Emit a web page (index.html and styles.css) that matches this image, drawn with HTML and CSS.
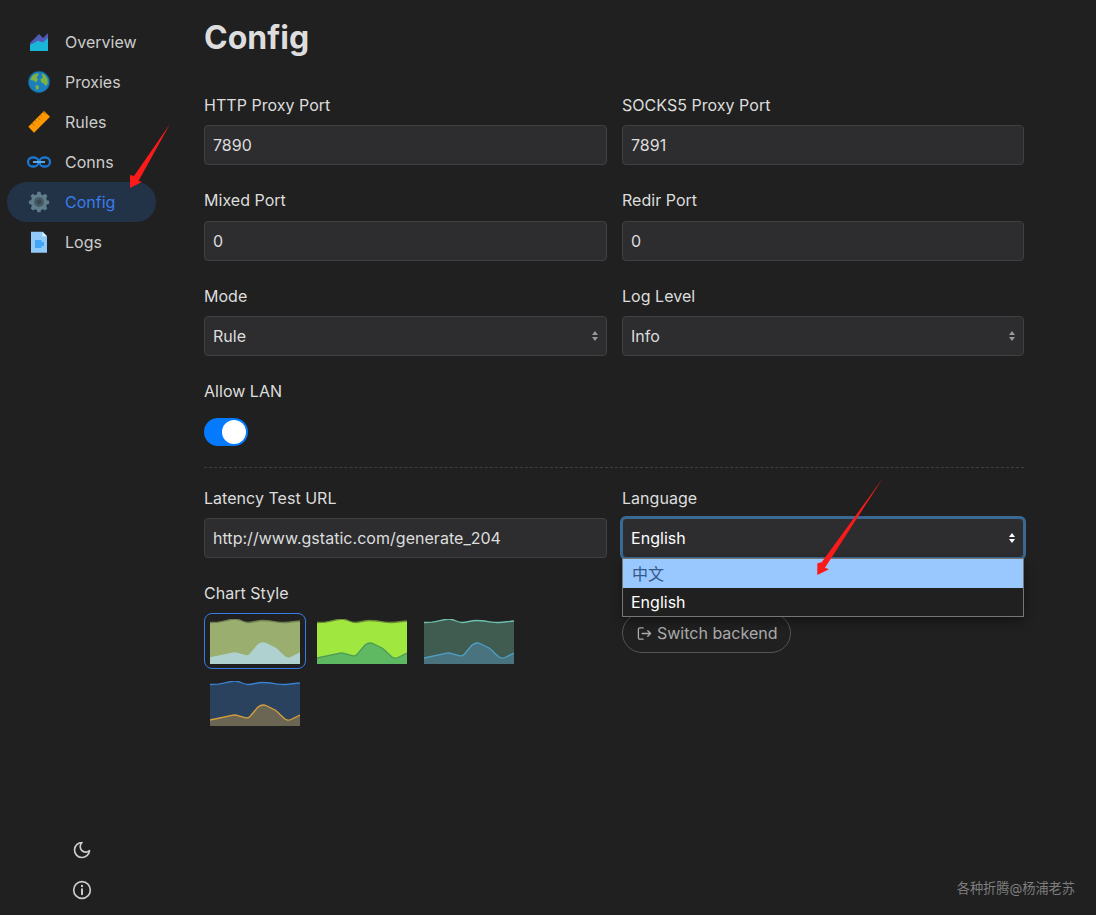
FILE: index.html
```html
<!DOCTYPE html>
<html lang="en">

<head>
    <meta charset="UTF-8">
    <meta name="viewport" content="width=device-width, initial-scale=1.0">
    <title>Config</title>
    <link rel="stylesheet" href="styles.css">
</head>

<body>

    <div class="app">
        <aside class="sidebar">
            <nav class="nav">
                <a class="nav-item">
                    <svg class="nav-icon" viewBox="0 0 28 28">
                        <path fill="#4f5bb5" d="M5 15 14 6 18 10 23 5V17H5Z" />
                        <path fill="#1ab6d8" d="M5 17 13 12.800 18 14.500 23 10V23H5Z" />
                    </svg>
                    <span>Overview</span>
                </a>
                <a class="nav-item">
                    <svg class="nav-icon" viewBox="0 0 28 28">
                        <circle cx="14" cy="14" r="10.700" fill="#1b7fbd" stroke="#12517c" stroke-width="0.600" />
                        <path fill="#7cb342" d="M9 6.500 13 5 13.500 7.500 11.500 9 13 11.500 11 14.500 8.500 12.500 5.500 12C5.800 9.800 7.200 7.800 9 6.500Z" />
                        <path fill="#7cb342" d="M17 5.500 20 7 22.500 11 22.800 15 21 18 18.500 15.500 16 14 15.500 11 18 9.500 17 7.500Z" />
                        <path fill="#7cb342" d="M11 17 14 18 13.500 21 11.500 22 10.500 19.500Z" />
                    </svg>
                    <span>Proxies</span>
                </a>
                <a class="nav-item">
                    <svg class="nav-icon" viewBox="0 0 28 28">
                        <path fill="#ff9800" d="M3.300 18.700 19 3 25 8.700 9 24.700Z" />
                        <path stroke="#b06a00" stroke-width="1" d="M7 15 9.500 17.500M9.800 12.200 11.300 13.700M12.600 9.400 15.100 11.900M15.400 6.600 16.900 8.100M18.200 3.800 20.700 6.300" />
                    </svg>
                    <span>Rules</span>
                </a>
                <a class="nav-item">
                    <svg class="nav-icon" viewBox="0 0 28 28">
                        <g fill="none" stroke="#1976d2" stroke-width="2.300">
                            <rect x="3" y="9.500" width="10.500" height="9" rx="4.500" />
                            <rect x="14.500" y="9.500" width="10.500" height="9" rx="4.500" />
                        </g>
                        <path stroke="#64b5f6" stroke-width="1.800" d="M8 14H20" />
                    </svg>
                    <span>Conns</span>
                </a>
                <a class="nav-item active">
                    <svg class="nav-icon" viewBox="0 0 28 28">
                        <g transform="translate(2.960 2.700) scale(0.920)">
                            <path fill="#607d8b" d="M10.300 1.200H13.700L14.300 4 16.300 4.900 18.800 3.400 21.200 5.800 19.800 8.300 20.600 10.300 23 11V14.200L20.500 15 19.700 16.900 21.100 19.200 18.700 21.600 16.300 20.100 14.300 20.900 13.700 23.500H10.300L9.700 20.900 7.700 20.100 5.300 21.600 2.900 19.200 4.300 16.900 3.500 15 1 14.200V11L3.400 10.300 4.200 8.300 2.800 5.800 5.200 3.400 7.700 4.900 9.700 4Z" />
                            <circle cx="12" cy="12.300" r="5.400" fill="#455a64" />
                            <circle cx="12" cy="12.300" r="2.600" fill="#37474f" />
                        </g>
                    </svg>
                    <span>Config</span>
                </a>
                <a class="nav-item">
                    <svg class="nav-icon" viewBox="0 0 28 28">
                        <path fill="#90caf9" d="M6 3.700H17.500L22 8.200V24.700H6Z" />
                        <path fill="#e1f5fe" d="M17.500 3.700 22 8.200H17.500Z" />
                        <path fill="#42a5f5" d="M10 12H16.500V14H19V18H16.500V20H10Z" />
                    </svg>
                    <span>Logs</span>
                </a>
            </nav>
            <div class="side-tools">
                <button class="tool-btn">
                    <svg viewBox="0 0 24 24" class="tool-icon">
                        <path d="M12 3C11.900 3 12 3 12 3A6.500 6.500 0 0 0 21 12.800 9 9 0 1 1 12 3Z" />
                    </svg>
                </button>
                <button class="tool-btn">
                    <svg viewBox="0 0 24 24" class="tool-icon">
                        <circle cx="12" cy="12" r="10" />
                        <path d="M12 11V17" stroke-width="2.400" />
                        <path d="M12 7V7.500" stroke-width="2.600" />
                    </svg>
                </button>
            </div>
        </aside>

        <main class="content">
            <h1 class="page-title">Config</h1>

            <div class="form-grid">
                <div class="field">
                    <label class="field-label">HTTP Proxy Port</label>
                    <input class="input" value="7890">
                </div>
                <div class="field">
                    <label class="field-label">SOCKS5 Proxy Port</label>
                    <input class="input" value="7891">
                </div>
                <div class="field">
                    <label class="field-label">Mixed Port</label>
                    <input class="input" value="0">
                </div>
                <div class="field">
                    <label class="field-label">Redir Port</label>
                    <input class="input" value="0">
                </div>
                <div class="field">
                    <label class="field-label">Mode</label>
                    <div class="select-wrap">
                        <select class="input select">
                            <option>Rule</option>
                        </select>
                    </div>
                </div>
                <div class="field">
                    <label class="field-label">Log Level</label>
                    <div class="select-wrap">
                        <select class="input select">
                            <option>Info</option>
                        </select>
                    </div>
                </div>
            </div>

            <div class="lan-field">
                <label class="field-label lan-label">Allow LAN</label>
                <div class="toggle"><span class="knob"></span></div>
            </div>

            <hr class="divider">

            <div class="form-grid lower-grid">
                <div class="field">
                    <label class="field-label">Latency Test URL</label>
                    <input class="input" value="http://www.gstatic.com/generate_204">
                </div>
                <div class="field language-field">
                    <label class="field-label">Language</label>
                    <div class="select-wrap open">
                        <select class="input select focused">
                            <option>English</option>
                        </select>
                        <div class="dropdown">
                            <div class="dropdown-item highlighted">中文</div>
                            <div class="dropdown-item">English</div>
                        </div>
                    </div>
                </div>
                <div class="field">
                    <label class="field-label">Chart Style</label>
                    <div class="chart-list">
                        <div class="chart-option selected">
                            <svg class="chart chart-a" viewBox="0 0 90 45">
                                <defs>
                                    <path id="top-line" d="M0 3.500 8 3.200C14 2.800 19 0 25 0 30 0 33 3.500 38 3.500 43 3.500 47 1.500 52 1.500 60 1.500 68 3.500 75 3.500 80 3.500 85 2 90 2" />
                                    <path id="top-area" d="M0 3.500 8 3.200C14 2.800 19 0 25 0 30 0 33 3.500 38 3.500 43 3.500 47 1.500 52 1.500 60 1.500 68 3.500 75 3.500 80 3.500 85 2 90 2V45H0Z" />
                                    <path id="bottom-line" d="M0 39 23 34.200Q25 33.800 27 34.300L36 36.800Q38 37.300 40 35.500L48 26Q52 23 56 24.500L65 29Q68 31 70 33.500L75 38Q78 40 81 38.500L90 34" />
                                    <path id="bottom-area" d="M0 39 23 34.200Q25 33.800 27 34.300L36 36.800Q38 37.300 40 35.500L48 26Q52 23 56 24.500L65 29Q68 31 70 33.500L75 38Q78 40 81 38.500L90 34V45H0Z" />
                                </defs>
                                <use class="top-fill" href="#top-area" />
                                <use class="top-stroke" href="#top-line" />
                                <use class="bottom-fill" href="#bottom-area" />
                                <use class="bottom-stroke" href="#bottom-line" />
                            </svg>
                        </div>
                        <div class="chart-option">
                            <svg class="chart chart-b" viewBox="0 0 90 45">
                                <use class="top-fill" href="#top-area" />
                                <use class="top-stroke" href="#top-line" />
                                <use class="bottom-fill" href="#bottom-area" />
                                <use class="bottom-stroke" href="#bottom-line" />
                            </svg>
                        </div>
                        <div class="chart-option">
                            <svg class="chart chart-c" viewBox="0 0 90 45">
                                <use class="top-fill" href="#top-area" />
                                <use class="top-stroke" href="#top-line" />
                                <use class="bottom-fill" href="#bottom-area" />
                                <use class="bottom-stroke" href="#bottom-line" />
                            </svg>
                        </div>
                        <div class="chart-option">
                            <svg class="chart chart-d" viewBox="0 0 90 45">
                                <use class="top-fill" href="#top-area" />
                                <use class="top-stroke" href="#top-line" />
                                <use class="bottom-fill" href="#bottom-area" />
                                <use class="bottom-stroke" href="#bottom-line" />
                            </svg>
                        </div>
                    </div>
                </div>
                <div class="field backend-field">
                    <button class="backend-btn">
                        <svg class="backend-icon" viewBox="0 0 16 16">
                            <path d="M6.500 2H3A1.500 1.500 0 0 0 1.500 3.500V12.500A1.500 1.500 0 0 0 3 14H6.500" />
                            <path d="M5.500 8H14.500M11.500 5 14.500 8 11.500 11" />
                        </svg>
                        <span>Switch backend</span>
                    </button>
                </div>
            </div>
        </main>
    </div>

    <!-- red arrows drawn on top of the screenshot -->
    <svg class="annotations" viewBox="0 0 1096 915">
        <path d="M170 124 138.500 181 142.300 181.700 130 188 130 175 134 176Z" />
        <path d="M883 478 825 567.700 829 569.300 817.300 575 817.300 563.300 821.700 562.300Z" />
    </svg>

    <div class="watermark">各种折腾@杨浦老苏</div>

</body>

</html>
```

FILE: styles.css
```css
* {
    box-sizing: border-box;
}

body {
    background-color: #202020;
    color: #ddd;
    font-family: Inter, "Noto Sans CJK SC", sans-serif;
    font-size: 16px;
    margin: 0;
    height: 915px;
    overflow: hidden;
    position: relative;
}

.app {
    display: flex;
    height: 100%;
}

/* sidebar */
.sidebar {
    width: 204px;
    flex-shrink: 0;
    display: flex;
    flex-direction: column;
    justify-content: space-between;
    padding: 22px 0 5px 7px;
}

.nav-item {
    display: flex;
    align-items: center;
    width: 149px;
    height: 40px;
    padding-left: 18px;
    border-radius: 20px;
    color: #ccc;
}

.nav-item.active {
    background-color: #233347;
    color: #387cec;
}

.nav-icon {
    width: 28px;
    height: 28px;
    margin-right: 12px;
    flex-shrink: 0;
}

.side-tools {
    display: flex;
    flex-direction: column;
    align-items: flex-start;
    padding-left: 55px;
}

.tool-btn {
    width: 40px;
    height: 40px;
    padding: 0;
    border: 0;
    background: none;
    display: flex;
    align-items: center;
    justify-content: center;
}

.tool-icon {
    width: 20px;
    height: 20px;
    fill: none;
    stroke: #ccc;
    stroke-width: 2;
    stroke-linecap: round;
    stroke-linejoin: round;
}

/* main form */
.content {
    width: 820px;
}

.page-title {
    font-size: 32px;
    font-weight: 700;
    line-height: 40px;
    color: #ddd;
    margin: 18px 0 36.75px;
}

.form-grid {
    display: grid;
    grid-template-columns: 403px 402px;
    column-gap: 15px;
    row-gap: 25.25px;
}

.lower-grid {
    row-gap: 25px;
}

.field-label {
    display: block;
    line-height: 20px;
    margin-bottom: 10.25px;
    color: #ddd;
    letter-spacing: 0.03px;
}

.input {
    display: block;
    width: 100%;
    height: 40px;
    padding: 0 8px;
    background-color: #2d2d30;
    border: 1px solid #404043;
    border-radius: 4px;
    color: #ddd;
    font-family: inherit;
    font-size: 16px;
    letter-spacing: 0.03px;
    outline: none;
}

.select {
    appearance: none;
    padding-right: 24px;
}

.select.focused {
    color: #fff;
    border-color: #3a6a94;
    box-shadow: 0 0 0 2px #3a6a94;
}

.select-wrap {
    position: relative;
}

/* up and down carets of the select */
.select-wrap::before,
.select-wrap::after {
    content: "";
    position: absolute;
    right: 9.500px;
    border-left: 3.500px solid transparent;
    border-right: 3.500px solid transparent;
    pointer-events: none;
}

.select-wrap::before {
    top: 15px;
    border-bottom: 4.500px solid #999;
}

.select-wrap::after {
    top: 20.500px;
    border-top: 4.500px solid #999;
}

.select-wrap.open::before {
    border-bottom-color: #fff;
}

.select-wrap.open::after {
    border-top-color: #fff;
}

.dropdown {
    position: absolute;
    top: 40px;
    left: 0;
    right: 0;
    z-index: 5;
    background-color: #202020;
    border: 1px solid #767676;
    box-shadow: 0 4px 10px rgba(0, 0, 0, 0.4);
}

.dropdown-item {
    height: 28.5px;
    line-height: 28.5px;
    padding-left: 8px;
    color: #fff;
}

.dropdown-item.highlighted {
    background-color: #99c8ff;
    color: #35578a;
    padding: 1px 0 0 9px;
}

.lan-field {
    margin-top: 25px;
}

.lan-label {
    margin-bottom: 17px;
}

.toggle {
    width: 44px;
    height: 28px;
    border-radius: 14px;
    background-color: #047aff;
    padding: 2px;
    display: flex;
    justify-content: flex-end;
}

.knob {
    width: 24px;
    height: 24px;
    border-radius: 50%;
    background-color: #fff;
}

.divider {
    border: 0;
    border-top: 1px dashed #3f3f3f;
    margin: 21px 0 19.75px;
}

/* chart style picker */
.chart-list {
    display: flex;
    flex-wrap: wrap;
    gap: 6px 5px;
}

.chart-option {
    width: 102px;
    height: 56px;
    padding: 5px;
    border: 1px solid transparent;
    border-radius: 8px;
}

.chart-option.selected {
    border-color: #387cec;
}

.chart {
    display: block;
    width: 90px;
    height: 45px;
}

.top-stroke,
.bottom-stroke {
    fill: none;
    stroke-width: 1.3;
}

.chart-a .top-fill {
    fill: #9aae70;
}

.chart-a .top-stroke {
    stroke: #6f7f4f;
}

.chart-a .bottom-fill {
    fill: #afd2d0;
}

.chart-a .bottom-stroke {
    stroke: #afd2d0;
}

.chart-b .top-fill {
    fill: #a0e840;
}

.chart-b .top-stroke {
    stroke: #6b8a35;
}

.chart-b .bottom-fill {
    fill: #5fb963;
}

.chart-b .bottom-stroke {
    stroke: #4e9a55;
}

.chart-c .top-fill {
    fill: #405c50;
}

.chart-c .top-stroke {
    stroke: #6fbfae;
}

.chart-c .bottom-fill {
    fill: #4a7380;
}

.chart-c .bottom-stroke {
    stroke: #4f9fc6;
}

.chart-d .top-fill {
    fill: #2a425e;
}

.chart-d .top-stroke {
    stroke: #3a7fd0;
}

.chart-d .bottom-fill {
    fill: #6b6553;
}

.chart-d .bottom-stroke {
    stroke: #d9a13c;
}

.backend-field {
    padding-top: 30.25px;
}

.backend-btn {
    display: flex;
    align-items: center;
    gap: 5px;
    width: 169px;
    height: 40px;
    padding: 0 0 0 14px;
    background: none;
    border: 1px solid #555;
    border-radius: 20px;
    color: #aaa;
    font-family: inherit;
    font-size: 16px;
}

.backend-icon {
    width: 15px;
    height: 15px;
    fill: none;
    stroke: #aaa;
    stroke-width: 1.400;
    stroke-linecap: round;
    stroke-linejoin: round;
}

/* overlays */
.annotations {
    position: absolute;
    top: 0;
    left: 0;
    width: 1096px;
    height: 915px;
    z-index: 10;
    fill: #fb1a1a;
    pointer-events: none;
}

.watermark {
    position: absolute;
    right: 21px;
    top: 879px;
    font-size: 13.2px;
    line-height: 18px;
    color: #7d7d7d;
}
```
